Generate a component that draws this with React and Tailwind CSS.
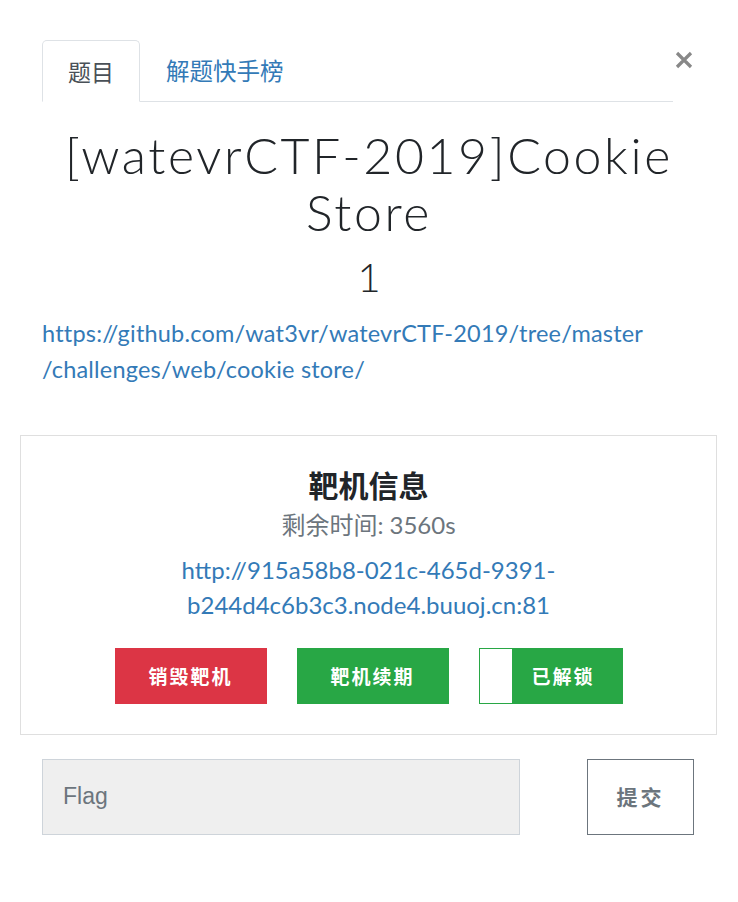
import React from "react";

export default function App() {
  return (
    <div className="w-[738px] h-[902px] bg-white overflow-hidden font-['Lato','Noto_Sans_CJK_SC',sans-serif]">
      <div className="px-[42px] pt-[40px]">
        {/* tabs */}
        <div className="flex items-start">
          <div className="flex w-[631px] border-b border-[#dee2e6]">
            <div className="h-[62px] w-[98px] -mb-px flex items-center justify-center border border-[#dee2e6] border-b-white rounded-t-[5px] bg-white text-[23px] text-[#495057] font-['Noto_Sans_CJK_SC',sans-serif]">
              题目
            </div>
            <div className="h-[61px] pl-[26px] flex items-center text-[23.5px] text-[#337ab7] font-['Noto_Sans_CJK_SC',sans-serif]">
              解题快手榜
            </div>
          </div>
          <div className="w-[21px] mt-[10px] flex justify-end">
            <svg width="20" height="20" viewBox="0 0 20 20">
              <path d="M3 3 L17 17 M17 3 L3 17" stroke="#888" strokeWidth="3.2" />
            </svg>
          </div>
        </div>

        {/* title */}
        <h1 className="mt-[25px] text-center text-[50px] leading-[57px] font-light text-[#212529] tracking-[2.6px] font-['Lato',sans-serif]">
          [watevrCTF-2019]Cookie
          <br />
          Store
        </h1>
        <div className="mt-[12px] text-center text-[40px] leading-[48px] font-light text-[#212529] font-['Lato',sans-serif]">
          1
        </div>

        {/* link */}
        <div className="mt-[14px] text-[23.5px] leading-[36px] tracking-[0.2px] text-[#337ab7]">
          https://github.com/wat3vr/watevrCTF-2019/tree/master
          <br />
          /challenges/web/cookie store/
        </div>

        {/* card */}
        <div className="mt-[48px] -ml-[22px] w-[697px] h-[300px] border border-[#dfdfdf] flex flex-col items-center pt-[28px]">
          <div className="text-[30px] leading-[40px] font-bold text-[#212529] font-['Noto_Sans_CJK_SC',sans-serif]">
            靶机信息
          </div>
          <div className="mt-[4px] text-[24px] leading-[32px] text-[#6c757d]">
            <span className="font-['Noto_Sans_CJK_SC',sans-serif]">剩余时间</span>: 3560s
          </div>
          <div className="mt-[11px] text-[24px] leading-[35px] text-[#337ab7] text-center">
            http://915a58b8-021c-465d-9391-
            <br />
            b244d4c6b3c3.node4.buuoj.cn:81
          </div>
          <div className="mt-[26px] flex gap-[30px]">
            <div className="w-[152px] h-[56px] bg-[#dc3545] text-white text-[19px] font-bold tracking-[2px] flex items-center justify-center font-['Noto_Sans_CJK_SC',sans-serif]">
              销毁靶机
            </div>
            <div className="w-[152px] h-[56px] bg-[#28a745] text-white text-[19px] font-bold tracking-[2px] flex items-center justify-center font-['Noto_Sans_CJK_SC',sans-serif]">
              靶机续期
            </div>
            <div className="w-[144px] h-[56px] bg-[#28a745] flex items-stretch">
              <div className="w-[32px] my-px ml-px bg-white" />
              <div className="flex-1 text-white text-[19px] font-bold tracking-[2px] flex items-center justify-center pr-[8px] font-['Noto_Sans_CJK_SC',sans-serif]">
                已解锁
              </div>
            </div>
          </div>
        </div>

        {/* flag row */}
        <div className="mt-[24px] flex items-start">
          <div className="w-[478px] h-[76px] bg-[#efefef] border border-[#ced4da] flex items-center pl-[20px] pb-[2px] text-[23px] text-[#6c757d] font-['Liberation_Sans',Arial,sans-serif]">
            Flag
          </div>
          <div className="ml-[67px] w-[107px] h-[76px] border border-[#6c757d] flex items-center justify-center text-[21px] font-bold text-[#6c757d] tracking-[3px] font-['Noto_Sans_CJK_SC',sans-serif]">
            提交
          </div>
        </div>
      </div>
    </div>
  );
}
